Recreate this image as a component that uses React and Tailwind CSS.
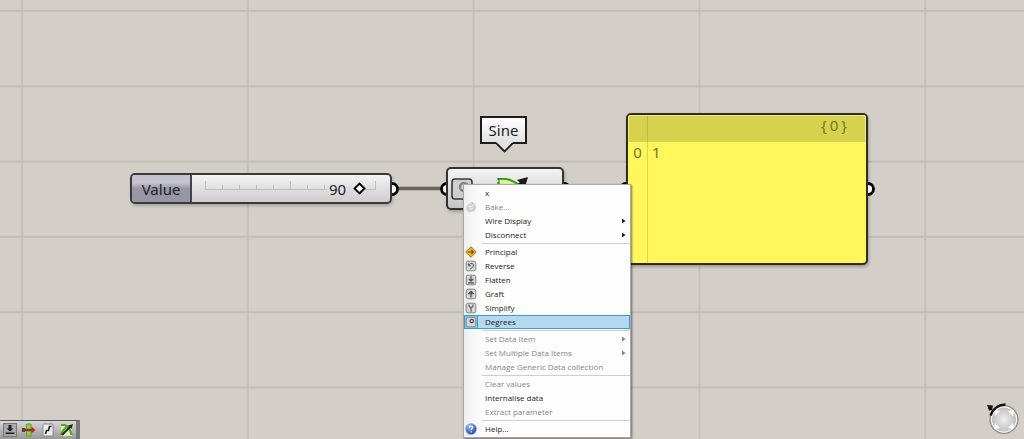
import { useState } from 'react';

function Port({ side }) {
    return (
        <svg className="block" width="8" height="14" viewBox="0 0 8 14">
            {side === 'left' ? (
                <path d="M8 1.5A5.3 5.3 0 0 0 8 12.5" fill="#fff" stroke="#000" strokeWidth="2.8" />
            ) : (
                <path d="M0 1.5A5.3 5.3 0 0 1 0 12.5" fill="#fff" stroke="#000" strokeWidth="2.8" />
            )}
        </svg>
    );
}

function BakeIcon() {
    return (
        <svg width="12" height="12" viewBox="0 0 12 12">
            <path d="M3 4L5 2.5L6 1.5L8 1.5L10 4L11 7L9 10L5 11L2 9.5L1.5 6.5Z" fill="#d2d2d2" stroke="#c2c2c2" strokeWidth=".6" />
            <path d="M3 5L6 6L9 3.5M5 8L8 7" stroke="#f1f1f1" fill="none" />
        </svg>
    );
}

function PrincipalIcon() {
    return (
        <svg width="12" height="12" viewBox="0 0 12 12">
            <path d="M6 .8L11.3 6L6 11.2L.7 6Z" fill="#eeb32c" stroke="#a67412" strokeWidth="1" strokeLinejoin="round" />
            <path d="M3 6H8M6.4 4.2L8.4 6L6.4 7.8" fill="none" stroke="#7a4a10" strokeWidth="1.1" />
        </svg>
    );
}

function BoxIcon({ children }) {
    return (
        <svg width="12" height="12" viewBox="0 0 12 12" fill="none" stroke="#555" strokeWidth="1.3">
            <rect x="1.2" y="1.2" width="9.6" height="9.6" rx="1.8" fill="#d8d8d8" stroke="#858585" strokeWidth="1" />
            {children}
        </svg>
    );
}

function HelpIcon() {
    return (
        <svg width="12" height="12" viewBox="0 0 12 12">
            <defs>
                <radialGradient id="help" cx=".35" cy=".25" r=".8">
                    <stop offset="0" stopColor="#a9bef5" />
                    <stop offset=".6" stopColor="#4d70d0" />
                    <stop offset="1" stopColor="#2b449b" />
                </radialGradient>
            </defs>
            <circle cx="6" cy="6" r="5.5" fill="url(#help)" stroke="#93a4d6" strokeWidth=".5" />
            <path d="M4.3 4.6Q4.4 3 6.1 3Q7.9 3.1 7.7 4.7Q7.5 5.5 6.3 6.2V7.2M6.3 8.3V9.4" fill="none" stroke="#fff" strokeWidth="1.1" />
        </svg>
    );
}

const menu = [
    [
        { label: 'x' },
        { label: 'Bake...', icon: <BakeIcon />, disabled: true },
        { label: 'Wire Display', submenu: true },
        { label: 'Disconnect', submenu: true },
    ],
    [
        { label: 'Principal', icon: <PrincipalIcon /> },
        { label: 'Reverse', icon: <BoxIcon><path d="M3.4 3.2V5.7H5.9M3.6 5.5Q5 3.2 7 3.4Q8.9 3.9 8.4 6Q7.6 8 5.2 8.9" strokeWidth="1" /></BoxIcon> },
        { label: 'Flatten', icon: <BoxIcon><path d="M6 2.2V7M3.8 5L6 7.2L8.2 5M3 8.8H9" /></BoxIcon> },
        { label: 'Graft', icon: <BoxIcon><path d="M6 9.5V4M3.3 6L6 3.3L8.7 6M4 5.5H8" /></BoxIcon> },
        { label: 'Simplify', icon: <BoxIcon><path d="M4 2.5V4L6 6.3L8 4V2.5M6 6V9.8" stroke="#666" /></BoxIcon> },
        { label: 'Degrees', icon: <BoxIcon><circle cx="6.8" cy="5" r="1.6" fill="#fff" stroke="#444" /></BoxIcon>, checked: true },
    ],
    [
        { label: 'Set Data Item', submenu: true, disabled: true },
        { label: 'Set Multiple Data Items', submenu: true, disabled: true },
        { label: 'Manage Generic Data collection', disabled: true },
    ],
    [
        { label: 'Clear values', disabled: true },
        { label: 'Internalise data' },
        { label: 'Extract parameter', disabled: true },
    ],
    [{ label: 'Help...', icon: <HelpIcon /> }],
];

function MenuItem({ label, icon, disabled, submenu, checked }) {
    return (
        <button
            type="button"
            role={checked ? 'menuitemcheckbox' : 'menuitem'}
            aria-checked={checked}
            disabled={disabled}
            className={`flex h-[14px] w-full items-center border pr-[3px] text-left text-[8px] leading-[12px] ${
                checked ? 'border-[#35a0cf] bg-[#b4d8f0]' : 'border-transparent'
            } ${disabled ? 'text-[#858585]' : 'text-[#1c1c1c]'}`}
        >
            <span className={`flex h-[12px] w-[12px] shrink-0 items-center justify-center ${checked ? 'bg-[#8fc5e6] outline outline-[#35a0cf]' : ''}`}>
                {icon}
            </span>
            <span className="flex-1 pl-2 whitespace-nowrap">{label}</span>
            {submenu && (
                <svg width="4" height="6" viewBox="0 0 4 6">
                    <path d="M0 .5L3.5 3L0 5.5Z" fill="currentColor" />
                </svg>
            )}
        </button>
    );
}

function ContextMenu() {
    return (
        <div
            role="menu"
            className="absolute top-[184px] left-[463px] w-[168px] border border-[#a8a8a8] bg-[#fdfdfd] bg-linear-to-r from-[#efefef] from-0% to-[#fdfdfd] to-[18px] py-px font-['Open_Sans','Noto_Sans',sans-serif] shadow-[1px_1px_2px_rgba(0,0,0,0.5)]"
        >
            {menu.map((group, i) => (
                <div key={i}>
                    {i > 0 && <div className="my-px ml-[18px] h-px bg-[#cfcfcf]" />}
                    {group.map((item) => (
                        <MenuItem key={item.label} {...item} />
                    ))}
                </div>
            ))}
        </div>
    );
}

function SliderNode() {
    const [value, setValue] = useState(90);

    return (
        <div className="absolute top-[173px] left-[130px] flex items-center">
            <div className="flex h-[31px] w-[262px] overflow-hidden rounded-[5px] border-2 border-[#3a3a3a] bg-linear-to-b from-[#f3f3f3] to-[#cdcdcd] shadow-[1px_2px_3px_rgba(0,0,0,0.2)]">
                <label
                    htmlFor="value"
                    className="flex w-[60px] items-center justify-center border-r-2 border-[#444] bg-linear-to-b from-[#c3c2ce] from-30% to-[#9796a5] to-50% text-[15px] leading-5 text-[#222]"
                >
                    Value
                </label>
                <div className="relative flex flex-1 items-center pl-2">
                    <svg className="absolute left-[13px]" width="172" height="16" viewBox="0 0 172 16">
                        <path
                            d="M.5 0V8.500M17.5 4V8M34.5 4V8M51.5 4V8M68.5 4V8M85.5 0V8M102.5 4V8M119.5 4V8M170.5 0V8M0 8.500H122M160 8.500H171"
                            fill="none"
                            stroke="#bcbcbc"
                        />
                    </svg>
                    <output htmlFor="value" className="absolute left-[137px] text-[15px] leading-5 text-[#222]">
                        {value}
                    </output>
                    <input
                        id="value"
                        type="range"
                        min="0"
                        max="100"
                        value={value}
                        onChange={(e) => setValue(Number(e.target.value))}
                        className="relative w-[181px] appearance-none bg-transparent [&::-webkit-slider-thumb]:h-[9px] [&::-webkit-slider-thumb]:w-[9px] [&::-webkit-slider-thumb]:rotate-45 [&::-webkit-slider-thumb]:appearance-none [&::-webkit-slider-thumb]:border-2 [&::-webkit-slider-thumb]:border-black [&::-webkit-slider-thumb]:bg-white"
                    />
                </div>
            </div>
            <Port side="right" />
        </div>
    );
}

function SineIcon() {
    return (
        <svg width="34" height="26" viewBox="0 0 34 26">
            <path d="M2 3H10Q18 4 25 10L24 22H2Z" fill="#79c83c" />
            <path d="M4 4H10Q16 5 21 10H4Z" fill="#d9f3a7" />
            <path d="M2 2.8H10Q18 4 25 11M3 11H24" fill="none" stroke="#3d9118" strokeWidth="1.8" />
            <path d="M2 2V22" stroke="#333" strokeDasharray="2 2" />
            <path d="M16 14L27 6" stroke="#1c1c1c" strokeWidth="3" />
            <path d="M21 4L32 1L29 11Z" fill="#1c1c1c" />
        </svg>
    );
}

function SineNode() {
    return (
        <>
            <div className="absolute top-[116px] left-[480px]">
                <div className="flex h-[28px] w-[47px] items-center justify-center border-2 border-[#1c1c1c] bg-linear-to-b from-white to-[#e2e2e2] text-[15px] leading-5 text-[#222]">
                    Sine
                </div>
                <svg className="absolute top-[26px] left-[16px]" width="17" height="11" viewBox="0 0 17 11">
                    <path d="M0 0H17V1L8.5 9.5L0 1Z" fill="#e2e2e2" />
                    <path d="M0 1L8.5 9.5L17 1" fill="none" stroke="#1c1c1c" strokeWidth="1.8" />
                </svg>
            </div>
            <div className="absolute top-[167px] left-[439px] flex items-center">
                <Port side="left" />
                <div className="-ml-px flex h-[43px] w-[118px] items-center gap-[23px] rounded-[5px] border-2 border-[#333] bg-linear-to-b from-[#f5f5f5] to-[#c4c4c4] pl-[3px] shadow-[1px_2px_3px_rgba(0,0,0,0.25)]">
                    <svg width="22" height="22" viewBox="0 0 22 22">
                        <rect x="1" y="1" width="20" height="20" rx="3" fill="#cfcfcf" stroke="#3a3a3a" strokeWidth="1.6" />
                        <circle cx="13" cy="9" r="4" fill="#ddd" stroke="#858585" strokeWidth="2.5" />
                    </svg>
                    <SineIcon />
                </div>
                <Port side="right" />
            </div>
        </>
    );
}

function PanelNode() {
    return (
        <div className="absolute top-[113px] left-[618px] flex items-center text-[15px] leading-[18px] text-[#74752a]">
            <Port side="left" />
            <div className="flex h-[152px] w-[242px] flex-col rounded-[5px] border-2 border-[#2d2d20] bg-[#fff75b] shadow-[1px_2px_3px_rgba(0,0,0,0.25)]">
                <div className="flex h-[27px] rounded-t-[3px] border border-b-0 border-[#eeea8b] bg-[#d6d24d]">
                    <div className="w-[19px] border-r border-[#bbb848]" />
                    <div className="flex flex-1 justify-end gap-[3px] pr-[18px]">
                        <span>{'{'}</span>
                        <span>0</span>
                        <span>{'}'}</span>
                    </div>
                </div>
                <div className="flex flex-1">
                    <div className="w-[20px] border-r border-[#dbd64e] pt-px text-center">0</div>
                    <div className="pt-px pl-1">1</div>
                </div>
            </div>
            <Port side="right" />
        </div>
    );
}

function Toolbar() {
    return (
        <div className="absolute bottom-0 left-0 flex h-[19px] w-[80px] items-center gap-[5px] border-t border-r-4 border-t-[#555] border-r-[#777] bg-linear-to-b from-[#d8d8d8] to-[#999] pl-[3px]">
            <button type="button" aria-label="Flatten">
                <svg width="14" height="14" viewBox="0 0 14 14">
                    <rect x=".5" y=".5" width="13" height="13" fill="#aaa" stroke="#777" />
                    <path d="M5.500 2H8.500V5.500H10.500L7 8.500L3.500 5.500H5.500ZM2.500 9.500H11.500V11H2.500Z" fill="#222" />
                </svg>
            </button>
            <button type="button" aria-label="Move">
                <svg width="14" height="14" viewBox="0 0 14 14">
                    <path d="M4.5 1H9V13H4.5Z" fill="#91cf43" stroke="#5fa12b" />
                    <path d="M1 7H11" stroke="#963020" strokeWidth="2.4" />
                    <path d="M9.5 3.5L13.5 7L9.5 10.5Z" fill="#b92f23" />
                    <path d="M0 5H3V9H0Z" fill="#663b2d" />
                </svg>
            </button>
            <button type="button" aria-label="Graph">
                <svg width="14" height="14" viewBox="0 0 14 14">
                    <rect x="2" y="1" width="10" height="12" rx="1" fill="#eee" stroke="#888" />
                    <path d="M4.5 11L5.500 7.500H7.5L8.500 3.5H10.500" fill="none" stroke="#222" strokeWidth="1.6" />
                </svg>
            </button>
            <button type="button" aria-label="Sine">
                <svg width="14" height="14" viewBox="0 0 14 14">
                    <path d="M1 1H12V13H1Z" fill="#daf2b5" />
                    <path d="M1 2H5Q10 4 11.5 12M1 12Q3 5 9 3" fill="none" stroke="#51a622" strokeWidth="2.2" />
                    <path d="M2 12L10 4" stroke="#222" strokeWidth="1.8" />
                    <path d="M8 2.5L13 1L11.5 6Z" fill="#222" />
                </svg>
            </button>
        </div>
    );
}

function Compass() {
    return (
        <svg className="absolute right-[4px] bottom-[4px]" width="34" height="33" viewBox="0 0 34 33">
            <defs>
                <radialGradient id="compass">
                    <stop offset="0" stopColor="#eee" />
                    <stop offset="1" stopColor="#bbb" />
                </radialGradient>
            </defs>
            <circle cx="18" cy="17.500" r="13.8" fill="url(#compass)" stroke="#8c8c8c" strokeWidth="1.600" />
            <circle cx="18" cy="17.500" r="12.6" fill="none" stroke="#f5f5f5" strokeWidth="1.200" />
            <path d="M8 8L14 9L9 14ZM28 8L22 9L27 14ZM8 27L14 26L9 21ZM28 27L22 26L27 21Z" fill="#fff" />
            <path d="M4.5 13.500Q8 3 19.500 2.500" fill="none" stroke="#111" strokeWidth="2.4" />
            <path d="M1 3L7 3.500L6 8L3 8.500Z" fill="#111" />
        </svg>
    );
}

export default function App() {
    return (
        <main className="relative min-h-screen w-full overflow-hidden bg-[#d3cfc8] font-['Noto_Sans','Open_Sans',sans-serif]">
            {/* Canvas grid */}
            <svg className="absolute inset-0 h-full w-full">
                <defs>
                    <pattern id="grid" x="21" y="10" width="225.8" height="75.3" patternUnits="userSpaceOnUse">
                        <path d="M0 1H226M1 0V76" fill="none" stroke="#bdb9b2" strokeWidth="1.3" />
                    </pattern>
                </defs>
                <rect width="100%" height="100%" fill="url(#grid)" />
            </svg>

            {/* Wires */}
            <svg className="absolute inset-0 h-full w-full">
                <path d="M396 188.500H442M568 188.500H620" stroke="#69655e" strokeWidth="3.5" />
            </svg>

            <SliderNode />
            <SineNode />
            <PanelNode />
            <Toolbar />
            <Compass />
            <ContextMenu />
        </main>
    );
}
